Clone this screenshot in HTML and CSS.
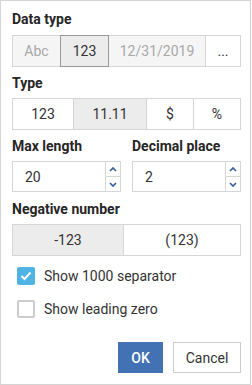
FILE: index.html
```html
<!DOCTYPE html>
<html lang="en">
<head>
    <meta charset="UTF-8">
    <meta name="viewport" content="width=device-width, initial-scale=1.0">
    <title>Number format</title>
    <link rel="stylesheet" href="styles.css">
</head>
<body>
    <div class="dialog">
        <div class="label label-first">Data type</div>
        <div class="segments seg-data">
            <div class="seg disabled">Abc</div>
            <div class="seg selected">123</div>
            <div class="seg disabled">12/31/2019</div>
            <div class="seg">...</div>
        </div>

        <div class="label">Type</div>
        <div class="segments seg-type">
            <div class="seg">123</div>
            <div class="seg active">11.11</div>
            <div class="seg">$</div>
            <div class="seg">%</div>
        </div>

        <div class="field-grid">
            <div class="field">
                <div class="label">Max length</div>
                <div class="spin">
                    <div class="spin-value">20</div>
                    <div class="spin-buttons">
                        <div class="spin-btn">
                            <svg width="8" height="5" viewBox="0 0 8 5"><polyline points="1,4 4,1 7,4" fill="none" stroke="#2d5f9e" stroke-width="1.6"/></svg>
                        </div>
                        <div class="spin-btn">
                            <svg width="8" height="5" viewBox="0 0 8 5"><polyline points="1,1 4,4 7,1" fill="none" stroke="#2d5f9e" stroke-width="1.6"/></svg>
                        </div>
                    </div>
                </div>
            </div>
            <div class="field">
                <div class="label">Decimal place</div>
                <div class="spin">
                    <div class="spin-value">2</div>
                    <div class="spin-buttons">
                        <div class="spin-btn">
                            <svg width="8" height="5" viewBox="0 0 8 5"><polyline points="1,4 4,1 7,4" fill="none" stroke="#2d5f9e" stroke-width="1.6"/></svg>
                        </div>
                        <div class="spin-btn">
                            <svg width="8" height="5" viewBox="0 0 8 5"><polyline points="1,1 4,4 7,1" fill="none" stroke="#2d5f9e" stroke-width="1.6"/></svg>
                        </div>
                    </div>
                </div>
            </div>
        </div>

        <div class="label label-neg">Negative number</div>
        <div class="segments seg-neg">
            <div class="seg active">-123</div>
            <div class="seg">(123)</div>
        </div>

        <div class="checks">
            <label class="check">
                <span class="box checked">
                    <svg width="12" height="10" viewBox="0 0 12 10"><polyline points="1.5,5 4.5,8 10.5,1.5" fill="none" stroke="#fff" stroke-width="2"/></svg>
                </span>
                Show 1000 separator
            </label>
            <label class="check">
                <span class="box"></span>
                Show leading zero
            </label>
        </div>

        <div class="actions">
            <button class="btn btn-primary">OK</button>
            <button class="btn btn-default">Cancel</button>
        </div>
    </div>
</body>
</html>
```

FILE: styles.css
```css
* {
    margin: 0;
    padding: 0;
    box-sizing: border-box;
}

body {
    font-family: Roboto, "Liberation Sans", Arial, sans-serif;
    font-size: 14px;
    color: #333333;
    background: #ffffff;
}

.dialog {
    width: 251px;
    height: 385px;
    border: 1px solid #d4d4d4;
    padding: 10px 9px 0 11px;
}

.label {
    font-weight: bold;
    font-size: 14px;
    line-height: 16px;
    color: #262626;
    margin-top: 8px;
    margin-bottom: 7px;
}

.label-first {
    margin-top: 0;
    margin-bottom: 8px;
}

.label-neg {
    margin-top: 9px;
}

.segments {
    display: grid;
    height: 32px;
}

.seg-data {
    grid-template-columns: 49px 48px 97px 1fr;
}

.seg-type {
    grid-template-columns: 62px 73px 47px 1fr;
}

.seg-neg {
    grid-template-columns: 112px 1fr;
}

.seg {
    display: flex;
    align-items: center;
    justify-content: center;
    border: 1px solid #d6d6d6;
    margin-left: -1px;
    background: #ffffff;
    color: #333333;
    font-size: 14px;
}

.seg:first-child {
    margin-left: 0;
}

.seg.disabled {
    background: #f5f5f5;
    color: #a8a8a8;
}

.seg.selected {
    background: #ececec;
    border-color: #9a9a9a;
    position: relative;
}

.seg.active {
    background: #ececec;
}

.field-grid {
    display: grid;
    grid-template-columns: 1fr 1fr;
    gap: 11px;
}

.spin {
    display: flex;
    height: 31px;
    border: 1px solid #d6d6d6;
}

.spin-value {
    flex: 1;
    display: flex;
    align-items: center;
    padding-left: 12px;
    font-size: 14px;
}

.spin-buttons {
    width: 15px;
    border-left: 1px solid #d6d6d6;
    display: flex;
    flex-direction: column;
}

.spin-btn {
    flex: 1;
    display: flex;
    align-items: center;
    justify-content: center;
}

.spin-btn + .spin-btn {
    border-top: 1px solid #d6d6d6;
}

.checks {
    margin-top: 11px;
    padding-left: 5px;
    display: flex;
    flex-direction: column;
    gap: 15px;
}

.check {
    display: flex;
    align-items: center;
    height: 18px;
    gap: 9px;
    font-size: 14px;
    color: #333333;
}

.box {
    width: 18px;
    height: 18px;
    border: 2px solid #cccccc;
    border-radius: 2px;
    display: flex;
    align-items: center;
    justify-content: center;
}

.box.checked {
    background: #4fb3e6;
    border-color: #4fb3e6;
}

.actions {
    margin-top: 24px;
    display: flex;
    justify-content: flex-end;
    gap: 10px;
}

.btn {
    height: 31px;
    font-family: Roboto, "Liberation Sans", Arial, sans-serif;
    font-size: 14px;
    border: 1px solid #cccccc;
    background: #ffffff;
    color: #333333;
}

.btn-primary {
    width: 45px;
    background: #4272b3;
    border-color: #4272b3;
    color: #ffffff;
    font-weight: 500;
}

.btn-default {
    width: 68px;
}
```
